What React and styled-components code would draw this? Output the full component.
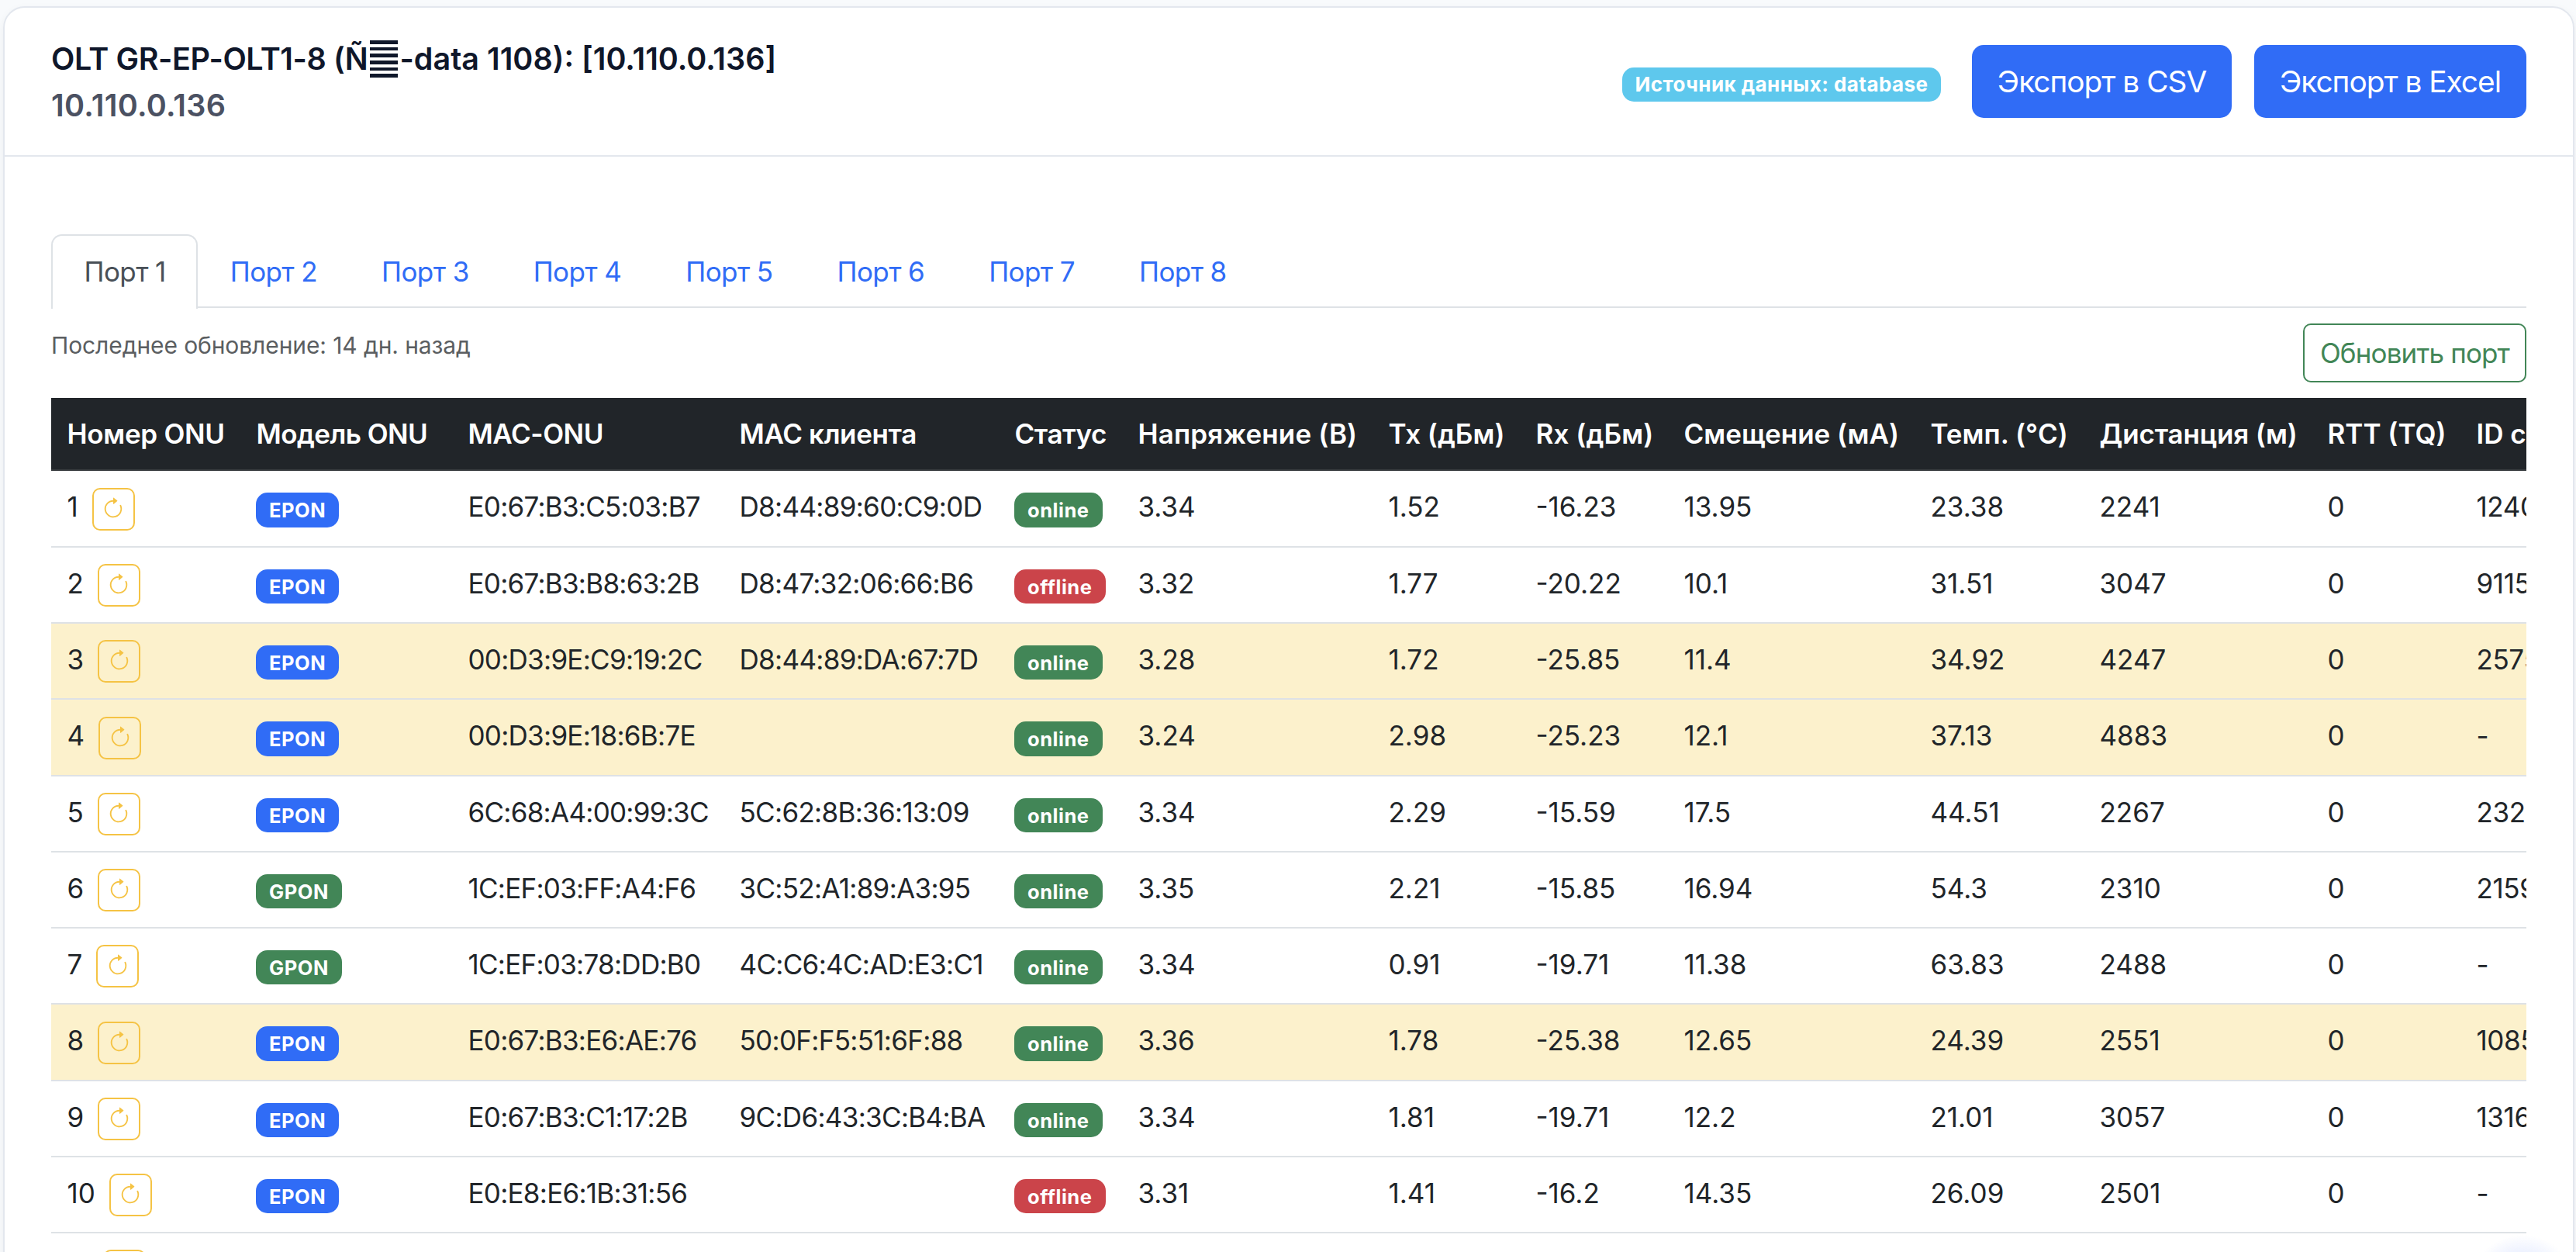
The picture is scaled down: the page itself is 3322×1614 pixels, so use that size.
import React, { useState } from "react";
import styled, { createGlobalStyle } from "styled-components";
import { BsArrowClockwise } from "react-icons/bs";

const GlobalStyle = createGlobalStyle`
  * { box-sizing: border-box; }
  body {
    margin: 0; background: #f8fafc; color: #212529; overflow: hidden;
    font-family: Inter, "Liberation Sans", sans-serif; font-size: 35px; line-height: 52px;
  }
  button { font-family: inherit; cursor: pointer; }
`;

const Page = styled.div` height: 1614px; padding: 8px 2px 0 4px; overflow: hidden; `;
const Card = styled.div`
  height: 1700px; background: #fff; border: 2px solid #e3e7ee; border-radius: 28px;
  box-shadow: 0 4px 12px rgba(15, 23, 42, .05);
`;
const CardHeader = styled.header`
  display: flex; justify-content: space-between; align-items: flex-start;
  height: 192px; padding: 36px 60px 0; border-bottom: 2px solid #e3e7ee;
`;
const Title = styled.h1`
  margin: 0; font-size: 39.5px; line-height: 60px; font-weight: 600; color: #0f172a; white-space: nowrap;
`;
const DeviceName = styled.span` letter-spacing: -.4px; `;
const Subtitle = styled.div`
  font-size: 39.5px; line-height: 60px; font-weight: 600; letter-spacing: .3px; color: #4b5162;
`;
const ControlGlyph = styled.span`
  display: inline-block; width: 36px; height: 48px; margin: 0 2px 0 3px; vertical-align: -10px;
  background: repeating-linear-gradient(to bottom, #0f172a 0 4.6px, #fff 4.6px 8.7px);
`;
const Actions = styled.div` display: flex; align-items: flex-start; padding-top: 12px; `;
const SourceBadge = styled.span`
  width: 411px; height: 44px; margin: 29px 40px 0 0; border-radius: 15px; background: #5ec8ed; color: #fff;
  font-size: 26px; line-height: 44px; font-weight: 700; letter-spacing: .44px; text-align: center; white-space: nowrap;
`;
const ExportButton = styled.button`
  width: ${(p) => p.$width}px; height: 94px; padding: 0 0 2px; margin-left: ${(p) => p.$gap || 0}px; border: 0;
  border-radius: 15px; background: #306cf6; color: #fff; font-size: 38.8px; letter-spacing: -1px; white-space: nowrap;
`;

const CardBody = styled.main` padding: 100px 60px 0; `;
const Tabs = styled.nav` display: flex; height: 95px; border-bottom: 2px solid #dee2e6; `;
const Tab = styled.button`
  height: 96px; padding: 0 39.5px 3px; border: 2px solid transparent; border-bottom: 0; border-radius: 14px 14px 0 0;
  background: none; color: #306cf6; font-size: 35px; letter-spacing: -.6px; white-space: nowrap;
  ${(p) => p.$active && `padding-left: 40.5px; background: #fff; border-color: #dee2e6; color: #495057;`}
`;
const PortBar = styled.div` display: flex; justify-content: space-between; height: 116px; `;
const Updated = styled.div`
  padding-top: 23px; font-size: 30px; line-height: 50px; letter-spacing: -.1px; color: #5b5e61;
`;
const RefreshButton = styled.button`
  width: 288px; height: 76px; margin-top: 20px; padding: 0 0 1px; border: 2px solid #428657; border-radius: 10px;
  background: #fff; color: #428657; font-size: 35px; letter-spacing: -.85px;
`;

const TableWrap = styled.div` width: 3192px; overflow: hidden; `;
const Table = styled.table` width: 3408px; table-layout: fixed; border-collapse: separate; border-spacing: 0; `;
const Th = styled.th`
  height: 94px; padding: 20px 0 20px 20.5px; background: #212529; border-bottom: 2px solid #373b3e; color: #fff;
  font-weight: 600; letter-spacing: ${(p) => p.$tracking || 0}px;
  text-align: left; vertical-align: top; white-space: nowrap;
`;
const Row = styled.tr`
  --extra: ${(p) => (p.$tall ? 1 : 0)}px;
  height: calc(98px + var(--extra)); background: ${(p) => (p.$warn ? "#fcf1cc" : "#fff")};
`;
const Td = styled.td`
  padding: 20px 0 0 20.5px; border-bottom: 2px solid #dee2e6; vertical-align: top; white-space: nowrap;
  letter-spacing: ${(p) => p.$tracking || 0}px;
`;
const NumberCell = styled.div` display: flex; align-items: flex-start; gap: 18px; height: 56px; `;
const ReloadButton = styled.button`
  display: flex; align-items: center; justify-content: center; width: 55px; height: 55px;
  margin-top: calc(1px + var(--extra)); padding: 0 0 2px;
  border: 2px solid #f5c344; border-radius: 10px; background: none; color: #f5c344; font-size: 30px;
`;
const colors = { EPON: "#306cf6", GPON: "#428657", online: "#428657", offline: "#cb444a" };
const Badge = styled.span`
  display: block; width: fit-content; height: calc(44px + var(--extra)); margin: 8px 0 0 -.6px; padding: 0 17.2px;
  border-radius: 15px; background: ${(p) => colors[p.children]}; color: #fff;
  font-size: 25.5px; line-height: 45px; font-weight: 700; letter-spacing: .5px;
`;
const Glow = styled.div`
  position: fixed; right: 0; bottom: -114px; width: 138px; height: 136px; border-radius: 50%;
  background: radial-gradient(closest-side, #dbe4fd, #eef2ff 68%, rgba(255, 255, 255, 0));
`;

// title, width, header letter-spacing, value letter-spacing
const columns = [
  ["Номер ONU", 244, -0.3], ["Модель ONU", 273, -0.55], ["MAC-ONU", 350, -0.45, -0.72],
  ["MAC клиента", 355, -0.35, -0.68], ["Статус", 159, -0.45], ["Напряжение (В)", 323, 0.15], ["Tx (дБм)", 190],
  ["Rx (дБм)", 191, 0.1], ["Смещение (мА)", 318], ["Темп. (°C)", 218], ["Дистанция (м)", 294, -0.15],
  ["RTT (TQ)", 192], ["ID счета", 301, 0, -0.4],
];

const rows = [
  ["1", "EPON", "E0:67:B3:C5:03:B7", "D8:44:89:60:C9:0D", "online", "3.34", "1.52", "-16.23", "13.95", "23.38", "2241", "0", "12402"],
  ["2", "EPON", "E0:67:B3:B8:63:2B", "D8:47:32:06:66:B6", "offline", "3.32", "1.77", "-20.22", "10.1", "31.51", "3047", "0", "9115"],
  ["3", "EPON", "00:D3:9E:C9:19:2C", "D8:44:89:DA:67:7D", "online", "3.28", "1.72", "-25.85", "11.4", "34.92", "4247", "0", "2575"],
  ["4", "EPON", "00:D3:9E:18:6B:7E", "", "online", "3.24", "2.98", "-25.23", "12.1", "37.13", "4883", "0", "-"],
  ["5", "EPON", "6C:68:A4:00:99:3C", "5C:62:8B:36:13:09", "online", "3.34", "2.29", "-15.59", "17.5", "44.51", "2267", "0", "232"],
  ["6", "GPON", "1C:EF:03:FF:A4:F6", "3C:52:A1:89:A3:95", "online", "3.35", "2.21", "-15.85", "16.94", "54.3", "2310", "0", "2159"],
  ["7", "GPON", "1C:EF:03:78:DD:B0", "4C:C6:4C:AD:E3:C1", "online", "3.34", "0.91", "-19.71", "11.38", "63.83", "2488", "0", "-"],
  ["8", "EPON", "E0:67:B3:E6:AE:76", "50:0F:F5:51:6F:88", "online", "3.36", "1.78", "-25.38", "12.65", "24.39", "2551", "0", "1085"],
  ["9", "EPON", "E0:67:B3:C1:17:2B", "9C:D6:43:3C:B4:BA", "online", "3.34", "1.81", "-19.71", "12.2", "21.01", "3057", "0", "1316"],
  ["10", "EPON", "E0:E8:E6:1B:31:56", "", "offline", "3.31", "1.41", "-16.2", "14.35", "26.09", "2501", "0", "-"],
  ["11", "EPON", "", "", "online", "", "", "", "", "", "", "", ""],
];
const tallRows = ["1", "4", "8"];

// Rx below this level is highlighted
const LOW_RX = -25;

function Cell({ index, value }) {
  if (index === 0) {
    return (
      <NumberCell>
        {value}
        <ReloadButton><BsArrowClockwise /></ReloadButton>
      </NumberCell>
    );
  }
  if (index === 1 || index === 4) return <Badge>{value}</Badge>;
  return value;
}

export default function App() {
  const [port, setPort] = useState(1);

  return (
    <Page>
      <GlobalStyle />
      <Card>
        <CardHeader>
          <div>
            <Title><DeviceName>OLT GR-EP-OLT1-8 (Ñ</DeviceName><ControlGlyph />-data 1108): [10.110.0.136]</Title>
            <Subtitle>10.110.0.136</Subtitle>
          </div>
          <Actions>
            <SourceBadge>Источник данных: database</SourceBadge>
            <ExportButton $width={335}>Экспорт в CSV</ExportButton>
            <ExportButton $width={351} $gap={29}>Экспорт в Excel</ExportButton>
          </Actions>
        </CardHeader>
        <CardBody>
          <Tabs>
            {[1, 2, 3, 4, 5, 6, 7, 8].map((n) => (
              <Tab key={n} $active={n === port} onClick={() => setPort(n)}>Порт {n}</Tab>
            ))}
          </Tabs>
          <PortBar>
            <Updated>Последнее обновление: 14 дн. назад</Updated>
            <RefreshButton>Обновить порт</RefreshButton>
          </PortBar>
          <TableWrap>
            <Table>
              <colgroup>
                {columns.map(([name, width]) => <col key={name} width={width} />)}
              </colgroup>
              <thead>
                <tr>
                  {columns.map(([name, , tracking]) => <Th key={name} $tracking={tracking}>{name}</Th>)}
                </tr>
              </thead>
              <tbody>
                {rows.map((r) => (
                  <Row key={r[0]} $warn={Number(r[7]) < LOW_RX} $tall={tallRows.includes(r[0])}>
                    {r.map((value, i) => (
                      <Td key={i} $tracking={columns[i][3]}><Cell index={i} value={value} /></Td>
                    ))}
                  </Row>
                ))}
              </tbody>
            </Table>
          </TableWrap>
        </CardBody>
      </Card>
      <Glow />
    </Page>
  );
}
